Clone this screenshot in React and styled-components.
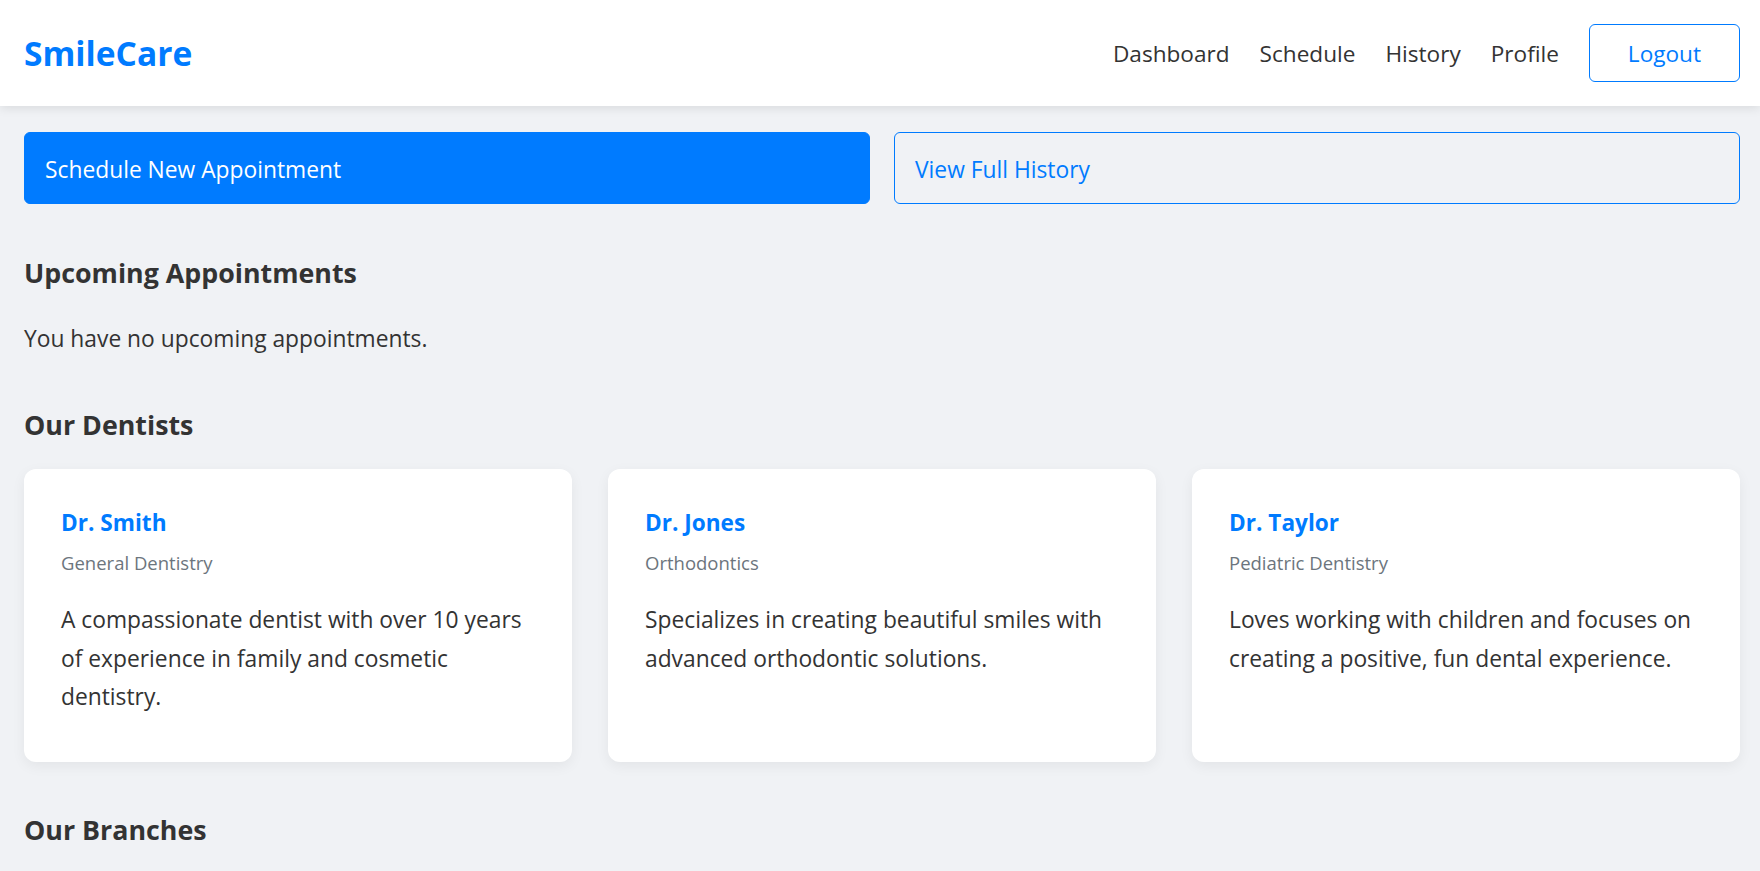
import React from 'react'
import styled, { createGlobalStyle } from 'styled-components'

const GlobalStyle = createGlobalStyle`
  * { box-sizing: border-box; }
  body {
    margin: 0;
    background: #f0f2f5;
    color: #333;
    font-family: "Open Sans", "Noto Sans", sans-serif;
    font-size: 22.8px;
  }
`

const Header = styled.header`
  height: 106px;
  padding: 0 20px 0 24px;
  display: flex;
  align-items: center;
  justify-content: space-between;
  background: #fff;
  box-shadow: 0 2px 10px rgba(0, 0, 0, 0.1);
  position: relative;
  z-index: 1;
`

const Logo = styled.div`
  font-size: 33.5px;
  font-weight: 700;
  color: #007bff;
`

const Nav = styled.nav`
  display: flex;
  align-items: center;
  gap: 30px;
`

const NavLink = styled.a`
  color: #333;
  text-decoration: none;
  font-size: 22.6px;
`

const OutlineButton = styled.button`
  height: 58px;
  padding: 0 38px;
  border: 1px solid #007bff;
  border-radius: 6px;
  background: #fff;
  color: #007bff;
  font-family: inherit;
  font-size: 22.6px;
`

const Main = styled.main`
  padding: 26px 20px 40px 24px;
`

const Actions = styled.div`
  display: grid;
  grid-template-columns: 1fr 1fr;
  gap: 24px;
`

const ActionButton = styled.button`
  height: 72px;
  padding: 2px 20px 0;
  text-align: left;
  border: 1px solid #007bff;
  border-radius: 6px;
  font-family: inherit;
  font-size: 22.8px;
  background: ${p => (p.$primary ? '#007bff' : 'transparent')};
  color: ${p => (p.$primary ? '#fff' : '#007bff')};
`

const SectionTitle = styled.h2`
  margin: ${p => p.$top}px 0 0;
  font-size: 26.8px;
  line-height: 40px;
  font-weight: 700;
  color: #333;
`

const Notice = styled.p`
  margin: 27px 0 0;
  line-height: 38.4px;
`

const Cards = styled.div`
  margin-top: 24px;
  display: grid;
  grid-template-columns: repeat(3, 1fr);
  gap: 36px;
`

const Card = styled.div`
  background: #fff;
  border-radius: 12px;
  padding: 36px 36px 36px 37px;
  box-shadow: 0 4px 14px rgba(0, 0, 0, 0.06);
`

const Name = styled.h3`
  margin: 0;
  font-size: 22.6px;
  line-height: 35px;
  font-weight: 700;
  color: #007bff;
`

const Specialty = styled.div`
  margin-top: 9px;
  font-size: 18.5px;
  line-height: 28px;
  color: #6c757d;
`

const Bio = styled.p`
  margin: 24px 0 9.5px;
  line-height: 38.4px;
  color: #333;
`

const dentists = [
  {
    name: 'Dr. Smith',
    specialty: 'General Dentistry',
    bio: 'A compassionate dentist with over 10 years of experience in family and cosmetic dentistry.',
  },
  {
    name: 'Dr. Jones',
    specialty: 'Orthodontics',
    bio: 'Specializes in creating beautiful smiles with advanced orthodontic solutions.',
  },
  {
    name: 'Dr. Taylor',
    specialty: 'Pediatric Dentistry',
    bio: 'Loves working with children and focuses on creating a positive, fun dental experience.',
  },
]

const App = () => {
  return (
    <>
      <GlobalStyle />
      <Header>
        <Logo>SmileCare</Logo>
        <Nav>
          <NavLink href="#">Dashboard</NavLink>
          <NavLink href="#">Schedule</NavLink>
          <NavLink href="#">History</NavLink>
          <NavLink href="#">Profile</NavLink>
          <OutlineButton>Logout</OutlineButton>
        </Nav>
      </Header>
      <Main>
        <Actions>
          <ActionButton $primary>Schedule New Appointment</ActionButton>
          <ActionButton>View Full History</ActionButton>
        </Actions>

        <SectionTitle $top={49}>Upcoming Appointments</SectionTitle>
        <Notice>You have no upcoming appointments.</Notice>

        <SectionTitle $top={47}>Our Dentists</SectionTitle>
        <Cards>
          {dentists.map(d => (
            <Card key={d.name}>
              <Name>{d.name}</Name>
              <Specialty>{d.specialty}</Specialty>
              <Bio>{d.bio}</Bio>
            </Card>
          ))}
        </Cards>

        <SectionTitle $top={48}>Our Branches</SectionTitle>
      </Main>
    </>
  )
}

export default App
